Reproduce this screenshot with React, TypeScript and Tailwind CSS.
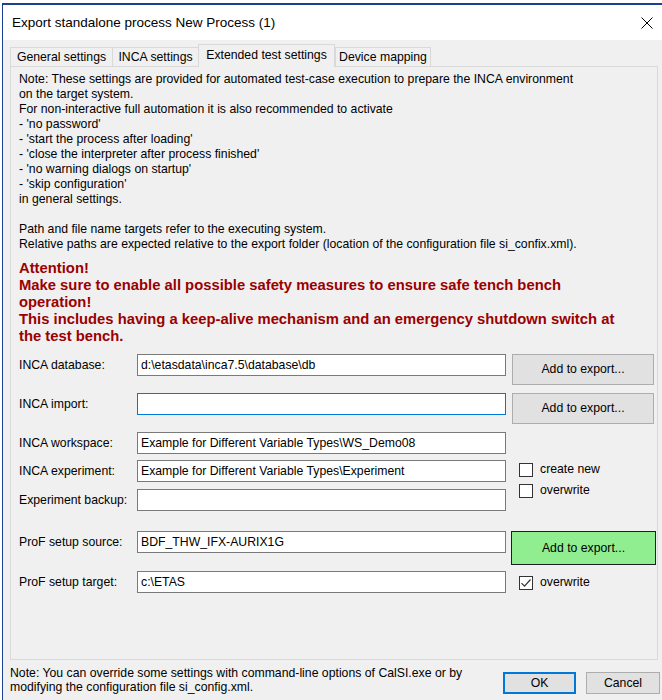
import React from 'react';

const noteLines = [
  'Note: These settings are provided for automated test-case execution to prepare the INCA environment',
  'on the target system.',
  'For non-interactive full automation it is also recommended to activate',
  "- 'no password'",
  "- 'start the process after loading'",
  "- 'close the interpreter after process finished'",
  "- 'no warning dialogs on startup'",
  "- 'skip configuration'",
  'in general settings.',
  '\u00a0',
  'Path and file name targets refer to the executing system.',
  'Relative paths are expected relative to the export folder (location of the configuration file si_confix.xml).',
];

const warningLines = [
  'Attention!',
  'Make sure to enable all possible safety measures to ensure safe tench bench',
  'operation!',
  'This includes having a keep-alive mechanism and an emergency shutdown switch at',
  'the test bench.',
];

const TextBox = ({ value = '', focused = false }: { value?: string; focused?: boolean }) => (
  <div
    className={`w-[369px] h-[22px] bg-white border flex items-center px-[3px] whitespace-nowrap ${
      focused ? 'border-[#0078d7]' : 'border-[#7a7a7a]'
    }`}
  >
    {value}
  </div>
);

const ExportButton = ({ green = false }: { green?: boolean }) =>
  green ? (
    <div className="w-[145px] h-[34px] ml-[5px] bg-[#90ee90] border border-[#1f1f1f] flex items-center justify-center">
      Add to export...
    </div>
  ) : (
    <div className="w-[142px] h-[31px] ml-[6px] bg-[#e1e1e1] border border-[#adadad] flex items-center justify-center">
      Add to export...
    </div>
  );

const CheckBox = ({ label, checked = false }: { label: string; checked?: boolean }) => (
  <div className="flex items-center gap-[7px] h-[21px]">
    <div className="w-[14px] h-[14px] bg-white border border-[#333333] flex items-center justify-center">
      {checked && (
        <svg width="12" height="12" viewBox="0 0 12 12">
          <path d="M1.5 6.2 L4.5 9.2 L10.5 2.5" fill="none" stroke="#333333" strokeWidth="1.2" />
        </svg>
      )}
    </div>
    <span>{label}</span>
  </div>
);

const Row = ({
  label,
  className,
  children,
}: {
  label: string;
  className: string;
  children: React.ReactNode;
}) => (
  <div className={`flex items-start ${className}`}>
    <div className="w-[118px] h-[22px] flex items-center whitespace-nowrap">{label}</div>
    {children}
  </div>
);

const tabs = [
  { name: 'General settings', w: 'w-[102px]' },
  { name: 'INCA settings', w: 'w-[86px]' },
  { name: 'Extended test settings', w: 'w-[137px]', active: true },
  { name: 'Device mapping', w: 'w-[96px]' },
];

export default function App() {
  return (
    <div
      className="w-[662px] h-[700px] bg-white pt-[3px] pl-[2px] overflow-hidden text-[12.25px] text-black leading-[15px]"
      style={{ fontFamily: '"Liberation Sans", Arial, sans-serif' }}
    >
      <div className="h-[697px] border-l border-t-2 border-[#1d3f8f] flex flex-col">
        {/* title bar */}
        <div className="h-[35px] bg-white flex items-center justify-between pl-[9px] pr-[9px] shrink-0">
          <span className="text-[13.5px]">Export standalone process New Process (1)</span>
          <svg width="12" height="12" viewBox="0 0 12 12">
            <path d="M0.5 0.5 L11.5 11.5 M11.5 0.5 L0.5 11.5" stroke="#000" strokeWidth="1" />
          </svg>
        </div>

        <div className="flex-1 bg-[#f0f0f0] flex flex-col pl-[7px]">
          {/* tab headers */}
          <div className="flex items-end h-[26px]">
            {tabs.map((t) =>
              t.active ? (
                <div
                  key={t.name}
                  className={`${t.w} h-[23px] -mb-px relative z-10 bg-[#f0f0f0] border border-b-0 border-[#d9d9d9] flex items-center justify-center whitespace-nowrap pb-[2px]`}
                >
                  {t.name}
                </div>
              ) : (
                <div
                  key={t.name}
                  className={`${t.w} h-[19px] bg-[#f0f0f0] border border-b-0 border-r-0 last:border-r border-[#d9d9d9] flex items-center justify-center whitespace-nowrap`}
                >
                  {t.name}
                </div>
              ),
            )}
          </div>

          {/* tab page */}
          <div className="w-[648px] h-[594px] border border-[#d9d9d9] pl-[8px] pt-[5px]">
            <div>
              {noteLines.map((l, i) => (
                <div key={i} className="whitespace-nowrap">
                  {l}
                </div>
              ))}
            </div>

            <div className="mt-[8px] text-[#9b0000] font-bold text-[14.8px] leading-[17px]">
              {warningLines.map((l, i) => (
                <div key={i} className="whitespace-nowrap">
                  {l}
                </div>
              ))}
            </div>

            <div className="mt-[9px] flex flex-col">
              <Row label="INCA database:" className="h-[39px]">
                <TextBox value="d:\etasdata\inca7.5\database\db" />
                <ExportButton />
              </Row>
              <Row label="INCA import:" className="h-[39px]">
                <TextBox focused />
                <ExportButton />
              </Row>
              <Row label="INCA workspace:" className="h-[28px]">
                <TextBox value="Example for Different Variable Types\WS_Demo08" />
              </Row>
              <Row label="INCA experiment:" className="h-[29px]">
                <TextBox value="Example for Different Variable Types\Experiment" />
                <div className="ml-[13px] -mt-[1px] flex flex-col">
                  <CheckBox label="create new" />
                  <CheckBox label="overwrite" />
                </div>
              </Row>
              <Row label="Experiment backup:" className="h-[42px]">
                <TextBox />
              </Row>
              <Row label="ProF setup source:" className="h-[40px]">
                <TextBox value="BDF_THW_IFX-AURIX1G" />
                <ExportButton green />
              </Row>
              <Row label="ProF setup target:" className="h-[22px]">
                <TextBox value="c:\ETAS" />
                <div className="ml-[13px] mt-[1px]">
                  <CheckBox label="overwrite" checked />
                </div>
              </Row>
            </div>
          </div>

          {/* footer */}
          <div className="flex items-start pr-[2px]">
            <div className="w-[490px] pt-[6px] leading-[14px]">
              <div className="whitespace-nowrap">
                Note: You can override some settings with command-line options of CalSI.exe or by
              </div>
              <div className="whitespace-nowrap">modifying the configuration file si_config.xml.</div>
            </div>
            <div className="flex gap-[10px] mt-[12px] ml-auto">
              <div className="w-[73px] h-[22px] bg-[#e1e1e1] border-2 border-[#0078d7] flex items-center justify-center">
                OK
              </div>
              <div className="w-[74px] h-[22px] bg-[#e1e1e1] border border-[#adadad] flex items-center justify-center">
                Cancel
              </div>
            </div>
          </div>
        </div>
      </div>
    </div>
  );
}
